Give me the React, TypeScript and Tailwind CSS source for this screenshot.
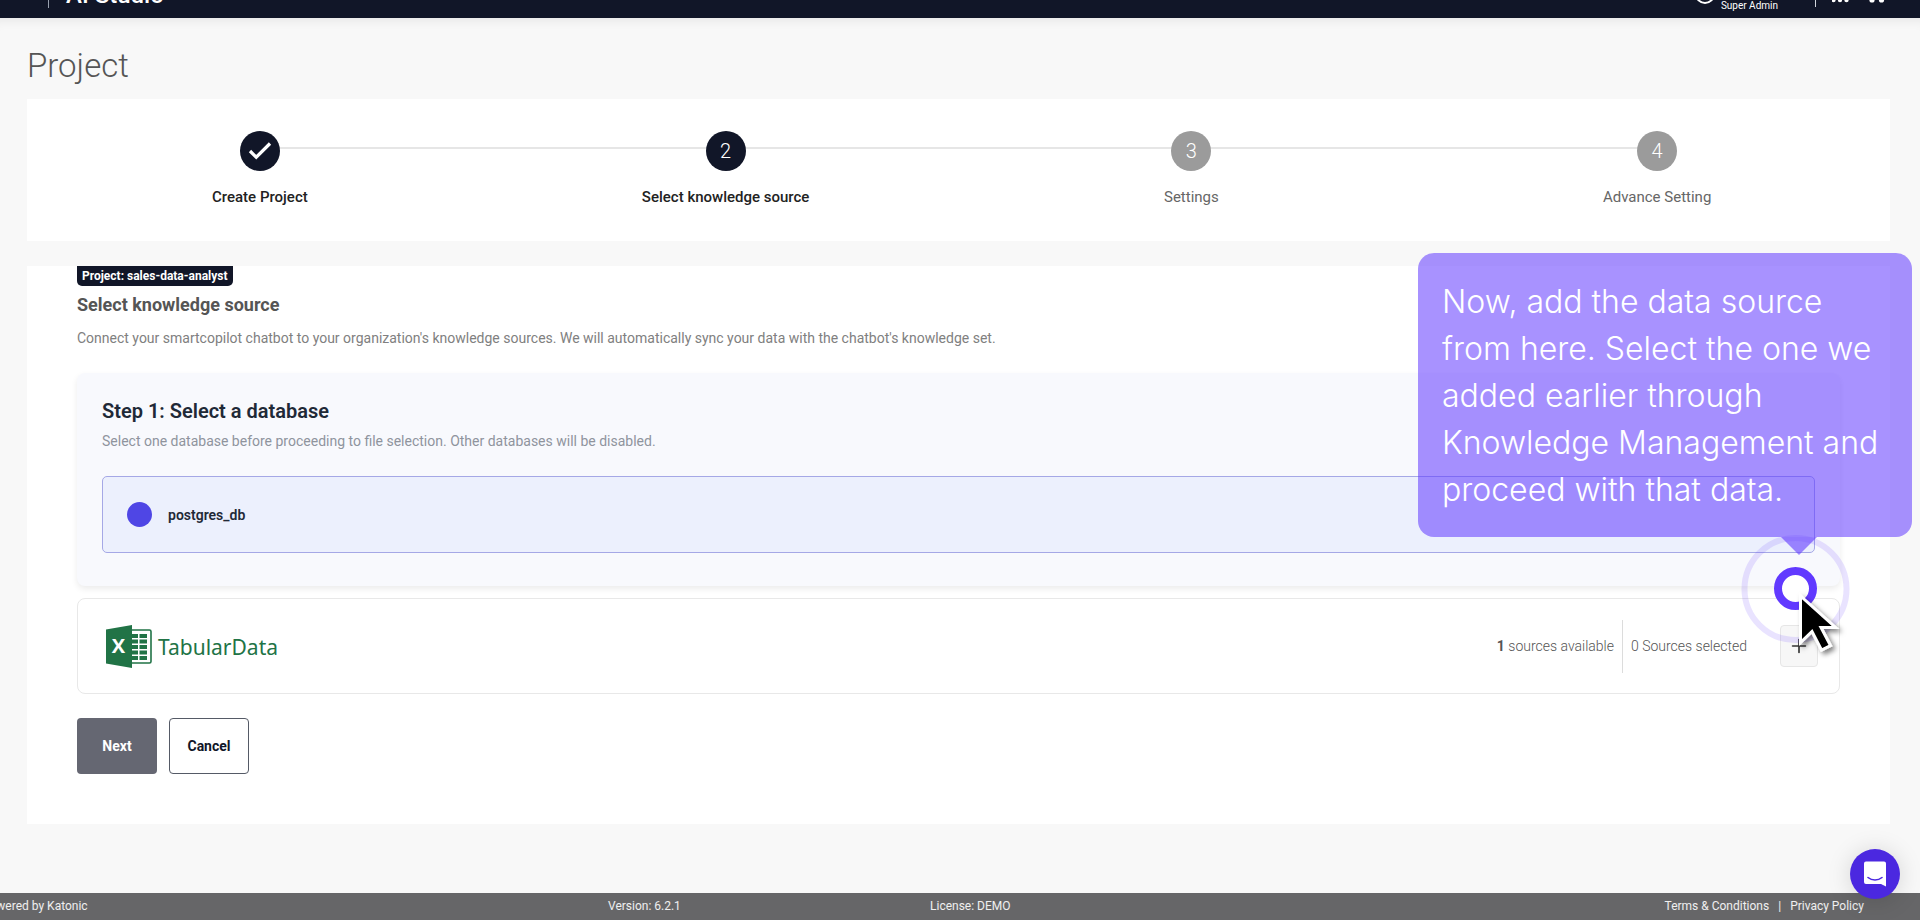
import { Check, Plus } from "lucide-react";

type StepState = "done" | "current" | "pending";

const steps: { label: string; state: StepState }[] = [
  { label: "Create Project", state: "done" },
  { label: "Select knowledge source", state: "current" },
  { label: "Settings", state: "pending" },
  { label: "Advance Setting", state: "pending" },
];

function TopBar() {
  return (
    <header className="relative z-10 flex h-[18px] shrink-0 items-end justify-between overflow-hidden bg-[#111628] pr-[34px] pl-12 text-white">
      <div className="flex h-full items-end">
        <span className="h-2 w-px self-start bg-gray-400" />
        <span className="ml-[17px] pb-[11px] text-2xl leading-6 font-medium">AI Studio</span>
      </div>
      <div className="flex h-full items-end">
        <svg className="mr-1.5 mb-3.5" width="20" height="20" viewBox="0 0 20 20" fill="none" stroke="white" strokeWidth="2">
          <circle cx="10" cy="10" r="9" />
        </svg>
        <span className="pb-1 text-[10px] leading-4">Super Admin</span>
        <span className="ml-[37px] h-[7px] w-px self-start bg-gray-300" />
        <svg className="ml-4 self-start" width="54" height="3" viewBox="0 0 54 3" fill="white">
          <circle cx="1.500" cy="0" r="2.200" />
          <circle cx="8" cy="0" r="2.200" />
          <circle cx="14.500" cy="0" r="2.200" />
          <circle cx="40" cy="0" r="2.600" />
          <circle cx="49.500" cy="0" r="2.600" />
        </svg>
      </div>
    </header>
  );
}

function Stepper() {
  return (
    <ol className="mt-[15px] grid grid-cols-4 bg-white pt-8 pb-8">
      {steps.map((step, i) => (
        <li key={step.label} className="relative flex h-[78px] flex-col items-center">
          {i < steps.length - 1 && (
            <span className="absolute top-4 left-1/2 h-0.5 w-full bg-[#e6e6e6]" />
          )}
          <span
            className={
              step.state === "pending"
                ? "relative z-1 flex size-10 items-center justify-center rounded-full bg-[#9b9b9b] text-xl font-light text-white"
                : "relative z-1 flex size-10 items-center justify-center rounded-full bg-[#111628] text-xl font-light text-white"
            }
          >
            {step.state === "done" ? <Check size={30} strokeWidth={2.6} strokeLinecap="butt" strokeLinejoin="miter" /> : i + 1}
          </span>
          <span
            className={
              step.state === "pending"
                ? "mt-4 text-[15px] leading-5 text-[#666]"
                : "mt-4 text-[15px] leading-5 font-medium text-[#222]"
            }
          >
            {step.label}
          </span>
        </li>
      ))}
    </ol>
  );
}

function SheetLogo() {
  return (
    <svg width="46" height="43" viewBox="0 0 46 43" aria-hidden="true">
      <rect x="20" y="5" width="25" height="33" rx="1.5" fill="white" stroke="#217346" strokeWidth="1.6" />
      <g fill="#217346">
        <path d="M26 9h6v4h-6zM33.500 9h7.500v4h-7.500zM26 14.500h6v4h-6zM33.500 14.500h7.500v4h-7.500zM26 20h6v4h-6zM33.500 20h7.500v4h-7.500zM26 25.500h6v4h-6zM33.500 25.500h7.500v4h-7.500zM26 31h6v4h-6zM33.500 31h7.500v4h-7.500z" />
        <path d="M0 4.500 26 0v43L0 38.500z" />
      </g>
      <text x="12.500" y="28" textAnchor="middle" fill="white" fontFamily="Open Sans, sans-serif" fontWeight="700" fontSize="20">
        X
      </text>
    </svg>
  );
}

function TourHint() {
  return (
    <>
      <div className="absolute -right-[94px] bottom-[130px] w-[494px] rounded-2xl bg-[#6139ff]/55 px-6 pt-[25px] pb-6 font-['Inter',sans-serif] text-[32px] leading-[47px] whitespace-nowrap text-white">
        <p>
          Now, add the data source
          <br />
          from here. Select the one we
          <br />
          added earlier through
          <br />
          Knowledge Management and
          <br />
          proceed with that data.
        </p>
      </div>
      <svg className="pointer-events-none absolute -top-[92px] -left-10" width="112" height="146" viewBox="0 0 112 146" aria-hidden="true">
        <defs>
          <filter id="pointer-shadow" x="-30%" y="-30%" width="180%" height="180%">
            <feDropShadow dx="3" dy="3" stdDeviation="2.5" floodOpacity="0.5" />
          </filter>
        </defs>
        <path d="M41 4h36L59 22z" fill="#6139ff" fillOpacity="0.6" />
        <circle cx="55.500" cy="56" r="51" fill="none" stroke="#6139ff" strokeOpacity="0.14" strokeWidth="6" />
        <circle cx="55.500" cy="55.500" r="17.500" fill="white" stroke="#6139ff" strokeWidth="8" />
        <path
          d="M60.500 63v46.500l11.500-11 9.500 18.500 9-4.500-9.500-18h14.500z"
          fill="black"
          stroke="white"
          strokeWidth="3"
          filter="url(#pointer-shadow)"
        />
      </svg>
    </>
  );
}

function KnowledgeSource() {
  return (
    <main className="mt-[25px] bg-white px-[50px] pb-[50px]">
      <div className="flex">
        <span className="rounded-b-[5px] bg-[#111628] px-[5px] text-xs leading-5 font-bold text-white">
          Project: sales-data-analyst
        </span>
      </div>
      <h2 className="mt-[7px] text-lg leading-6 font-bold text-[#555]">Select knowledge source</h2>
      <p className="mt-[11px] text-sm leading-5 text-[#808080]">
        Connect your smartcopilot chatbot to your organization's knowledge sources. We will automatically sync your data
        with the chatbot's knowledge set.
      </p>

      <section className="mt-[25px] rounded-lg bg-[#f8f9fd] px-[25px] pt-6 pb-[33px] shadow-[0_3px_6px_rgba(0,0,0,0.08)]">
        <h3 className="text-xl leading-7 font-semibold text-[#1f2937]">Step 1: Select a database</h3>
        <p className="mt-1 text-sm leading-6 text-[#8f949d]">
          Select one database before proceeding to file selection. Other databases will be disabled.
        </p>
        <button
          type="button"
          className="mt-[23px] flex h-[77px] w-full items-center gap-4 rounded-[5px] border border-[#a5a8e6] bg-[#ecf0fd] px-6 text-sm font-semibold text-[#1f2937]"
        >
          <span className="size-[25px] rounded-full bg-[#4f46e5]" />
          postgres_db
        </button>
      </section>

      <section className="mt-3 flex h-24 items-center justify-between rounded-lg border border-[#e8e8e8] bg-white pr-[21px] pl-7">
        <div className="flex items-center gap-1.5">
          <SheetLogo />
          <span className="pt-1 font-['Noto_Sans',sans-serif] text-[21px] text-[#217346]">TabularData</span>
        </div>
        <div className="flex items-center text-sm font-light text-[#555]">
          <span className="pr-2">
            <b className="font-bold">1</b> sources available
          </span>
          <span className="flex h-[53px] items-center border-l border-[#dcdcdc] pl-2">0 Sources selected</span>
          <div className="relative ml-[33px]">
            <button
              type="button"
              aria-label="Add source"
              className="flex h-[42px] w-[38px] items-center justify-center rounded border border-[#e6e6e6] bg-[#f7f7f7] text-[#333]"
            >
              <Plus size={22} strokeWidth={1.8} />
            </button>
            <TourHint />
          </div>
        </div>
      </section>

      <div className="mt-6 flex gap-3">
        <button type="button" className="h-14 w-20 rounded bg-[#656772] text-sm font-bold text-white">
          Next
        </button>
        <button type="button" className="h-14 w-20 rounded border border-[#555a66] bg-white text-sm font-bold text-[#111628]">
          Cancel
        </button>
      </div>
    </main>
  );
}

function Footer() {
  return (
    <footer className="relative grid h-[27px] grid-cols-[608fr_322fr_934fr] items-center overflow-hidden bg-[#666668] pr-14 pb-0.5 text-xs text-white/90">
      <span className="-ml-[18px]">Powered by Katonic</span>
      <span>Version: 6.2.1</span>
      <span className="flex justify-between">
        <span>License: DEMO</span>
        <span className="flex gap-[9px]">
          <a href="#terms">Terms &amp; Conditions</a>
          <span>|</span>
          <a href="#privacy">Privacy Policy</a>
        </span>
      </span>
    </footer>
  );
}

export default function App() {
  return (
    <div className="flex min-h-screen flex-col overflow-x-hidden bg-[#f8f8f8] font-['Roboto',sans-serif]">
      <TopBar />
      <div className="flex-1 pt-[30px] pr-[30px] pb-10 pl-[27px] shadow-[inset_0_12px_12px_-10px_rgba(0,0,0,0.08)]">
        <h1 className="text-[33px] leading-9 font-light text-[#555]">Project</h1>
        <Stepper />
        <KnowledgeSource />
      </div>
      <Footer />
      <button
        type="button"
        aria-label="Open chat"
        className="fixed right-5 bottom-[21px] z-20 flex size-[50px] items-center justify-center rounded-full bg-[#4b28e0] shadow-[0_2px_24px_rgba(0,0,0,0.15)]"
      >
        <svg width="24" height="26" viewBox="0 0 24 26" fill="none">
          <path d="M3 0.500h18a2 2 0 0 1 2 2V25.500l-5-2.500H3a2 2 0 0 1-2-2V2.500a2 2 0 0 1 2-2z" fill="white" />
          <path d="M5 16.500c4 3.300 10 3.300 14 0" stroke="#4b28e0" strokeWidth="1.600" strokeLinecap="round" />
        </svg>
      </button>
    </div>
  );
}
